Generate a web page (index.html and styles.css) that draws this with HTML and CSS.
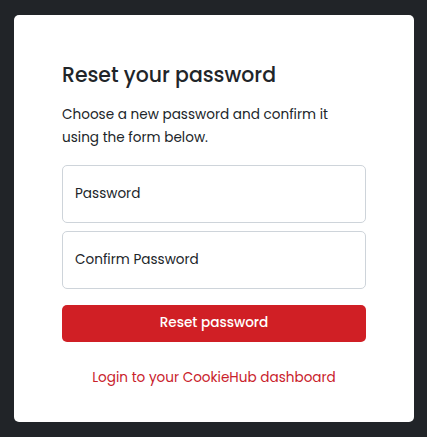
FILE: index.html
```html
<!DOCTYPE html>
<html lang="en">
<head>
<meta charset="utf-8">
<title>Reset your password</title>
<link rel="stylesheet" href="styles.css">
</head>
<body>
<main class="card">
  <h1 class="title">Reset your password</h1>
  <p class="intro">Choose a new password and confirm it using the form below.</p>
  <form class="form">
    <label class="field"><span class="field-label">Password</span></label>
    <label class="field"><span class="field-label">Confirm Password</span></label>
    <button type="button" class="btn">Reset password</button>
  </form>
  <p class="footer"><a class="link" href="#">Login to your CookieHub dashboard</a></p>
</main>
</body>
</html>
```
FILE: styles.css
```css
html, body {
  margin: 0;
  padding: 0;
}
body {
  background: #212428;
  font-family: "Poppins", "Open Sans", "DejaVu Sans", sans-serif;
  color: #212529;
  padding: 15px 13px 15px 14px;
  height: 437px;
  box-sizing: border-box;
  font-size: 13.6px;
}
.card {
  background: #fff;
  border-radius: 5px;
  height: 407px;
  box-sizing: border-box;
  padding: 47.6px 48px 0;
}
.title {
  margin: 0 0 15.9px;
  font-size: 20.4px;
  font-weight: 500;
  line-height: 24.5px;
}
.intro {
  margin: 0 0 16px;
  font-size: 13.6px;
  line-height: 23px;
  width: 280px;
}
.form {
  display: flex;
  flex-direction: column;
  gap: 8px;
}
.field {
  display: flex;
  align-items: center;
  height: 58px;
  box-sizing: border-box;
  border: 1px solid #ced4da;
  border-radius: 5px;
  padding: 0 12px;
  font-size: 13.6px;
}
.btn {
  margin-top: 8px;
  height: 37px;
  padding-top: 1px;
  border: 0;
  border-radius: 5px;
  background: #d01f25;
  color: #fff;
  font-family: inherit;
  font-size: 13.6px;
  font-weight: 500;
}
.footer {
  margin: 26px 0 0;
  text-align: center;
  font-size: 13.6px;
  line-height: 20px;
}
.link {
  color: #c9212b;
  text-decoration: none;
}
```
